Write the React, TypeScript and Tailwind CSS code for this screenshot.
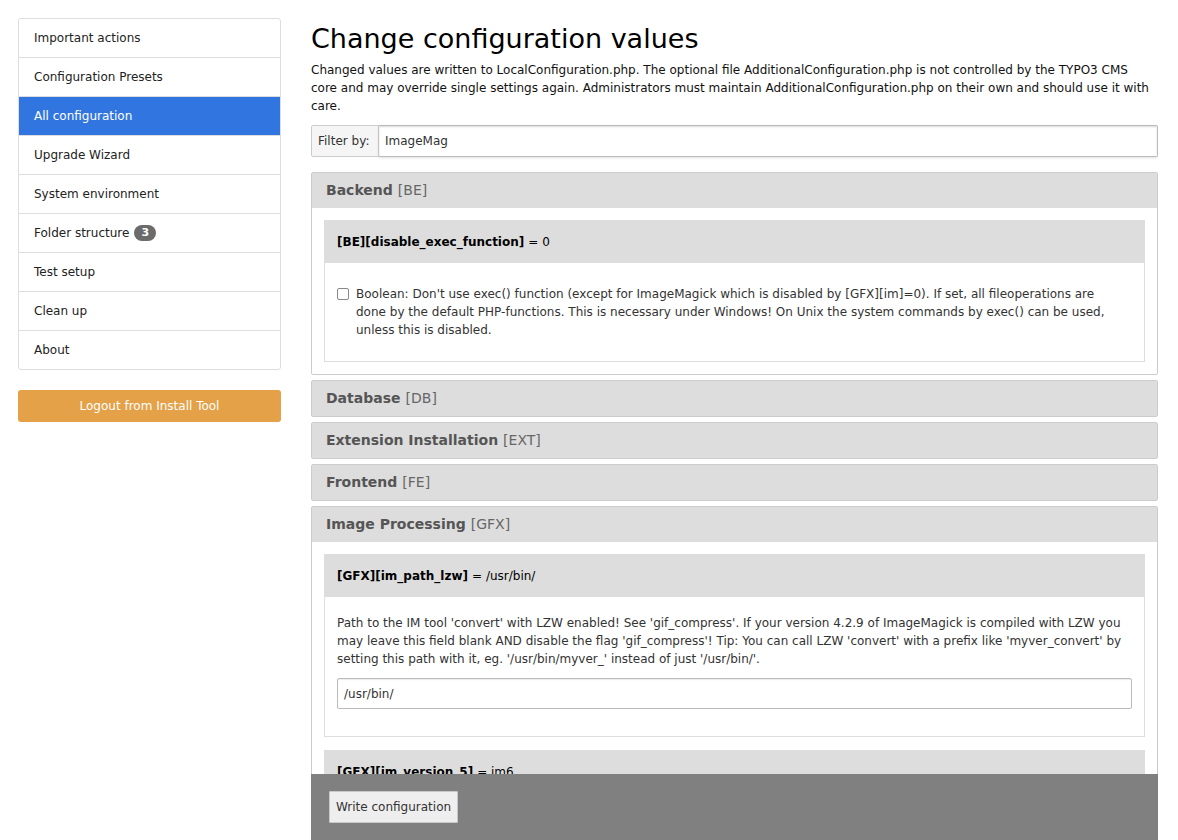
import React from "react";

const navItems = [
  { label: "Important actions" },
  { label: "Configuration Presets" },
  { label: "All configuration", active: true },
  { label: "Upgrade Wizard" },
  { label: "System environment" },
  { label: "Folder structure", badge: "3" },
  { label: "Test setup" },
  { label: "Clean up" },
  { label: "About" },
];

const collapsedSections = [
  { title: "Database", key: "DB" },
  { title: "Extension Installation", key: "EXT" },
  { title: "Frontend", key: "FE" },
];

const PanelHeader: React.FC<{ title: string; code: string }> = ({ title, code }) => (
  <div className="h-[35px] flex items-center pl-[14px] bg-[#dddddd] text-[14px] text-[#555]">
    <span className="font-bold">{title}</span>
    <span className="ml-[5px] text-[#666]">[{code}]</span>
  </div>
);

const ItemHeader: React.FC<{ name: string; value: string }> = ({ name, value }) => (
  <div className="h-[42px] flex items-center pl-[12px] bg-[#dddddd] text-black">
    <span className="font-bold">{name}</span>
    <span className="ml-[4px]">= {value}</span>
  </div>
);

export default function App() {
  return (
    <div className="flex gap-[30px] pl-[18px] pr-[20px] h-screen overflow-hidden bg-white text-[12px] text-[#333] font-['DejaVu_Sans',Verdana,sans-serif]">
      {/* Sidebar */}
      <aside className="w-[263px] shrink-0 pt-[18px]">
        <nav className="border border-[#dddddd] rounded-[3px] overflow-hidden">
          {navItems.map((item, i) => (
            <div
              key={item.label}
              className={`flex items-center pl-[15px] ${
                i < navItems.length - 1 ? "h-[39px] border-b border-[#dddddd]" : "h-[38px]"
              } ${item.active ? "bg-[#3176e0] text-white border-[#3176e0]" : "text-[#222]"}`}
            >
              {item.label}
              {item.badge && (
                <span className="ml-[5px] inline-flex items-center justify-center h-[16px] min-w-[22px] px-[6px] rounded-full bg-[#6b6b6b] text-white text-[11px] font-bold">
                  {item.badge}
                </span>
              )}
            </div>
          ))}
        </nav>
        <button
          type="button"
          className="mt-[20px] w-full h-[32px] rounded-[3px] bg-[#e4a147] text-white text-[12px]"
        >
          Logout from Install Tool
        </button>
      </aside>

      {/* Main */}
      <main className="flex-1 min-w-0 flex flex-col">
        <div className="flex-1 min-h-0 overflow-hidden pt-[22px]">
          <h1 className="text-[27px] leading-[34px] text-black">Change configuration values</h1>
          <p className="mt-[5px] pr-[8px] leading-[18px] text-[#111]">
            Changed values are written to LocalConfiguration.php. The optional file
            AdditionalConfiguration.php is not controlled by the TYPO3 CMS core and may override
            single settings again. Administrators must maintain AdditionalConfiguration.php on
            their own and should use it with care.
          </p>

          {/* Filter */}
          <div className="mt-[10px] flex h-[32px]">
            <div className="w-[68px] flex items-center pl-[6px] bg-[#f5f5f5] border border-[#cccccc] rounded-l-[2px] text-[#333]">
              Filter by:
            </div>
            <div className="flex-1 flex items-center pl-[6px] border border-l-0 border-[#bbbbbb] rounded-r-[2px] shadow-[inset_0_1px_2px_rgba(0,0,0,0.15),0_1px_3px_rgba(0,0,0,0.12)] text-[#333]">
              ImageMag
            </div>
          </div>

          {/* Backend */}
          <section className="mt-[15px] border border-[#cccccc] rounded-[2px]">
            <PanelHeader title="Backend" code="BE" />
            <div className="p-[12px]">
              <div className="border border-[#dddddd]">
                <ItemHeader name="[BE][disable_exec_function]" value="0" />
                <div className="pt-[22px] pb-[22px] pl-[12px] pr-[20px] flex items-start gap-[7px] leading-[18px]">
                  <span className="mt-[3px] shrink-0 w-[12px] h-[12px] border border-[#888] rounded-[2px] bg-white" />
                  <span>
                    Boolean: Don't use exec() function (except for ImageMagick which is disabled by
                    [GFX][im]=0). If set, all fileoperations are done by the default PHP-functions.
                    This is necessary under Windows! On Unix the system commands by exec() can be
                    used, unless this is disabled.
                  </span>
                </div>
              </div>
            </div>
          </section>

          {collapsedSections.map((s) => (
            <section key={s.key} className="mt-[5px] border border-[#cccccc] rounded-[2px]">
              <PanelHeader title={s.title} code={s.key} />
            </section>
          ))}

          {/* Image Processing */}
          <section className="mt-[5px] border border-[#cccccc] rounded-[2px]">
            <PanelHeader title="Image Processing" code="GFX" />
            <div className="p-[12px] flex flex-col gap-[13px]">
              <div className="border border-[#dddddd]">
                <ItemHeader name="[GFX][im_path_lzw]" value="/usr/bin/" />
                <div className="pt-[17px] pb-[27px] px-[12px] leading-[18px]">
                  <p>
                    Path to the IM tool 'convert' with LZW enabled! See 'gif_compress'. If your
                    version 4.2.9 of ImageMagick is compiled with LZW you may leave this field blank
                    AND disable the flag 'gif_compress'! Tip: You can call LZW 'convert' with a
                    prefix like 'myver_convert' by setting this path with it, eg. '/usr/bin/myver_'
                    instead of just '/usr/bin/'.
                  </p>
                  <div className="mt-[10px] h-[31px] flex items-center pl-[6px] border border-[#bbbbbb] rounded-[2px] shadow-[inset_0_1px_1px_rgba(0,0,0,0.08)] text-[#333]">
                    /usr/bin/
                  </div>
                </div>
              </div>
              <div className="border border-[#dddddd]">
                <ItemHeader name="[GFX][im_version_5]" value="im6" />
                <div className="h-[120px]" />
              </div>
            </div>
          </section>
        </div>

        {/* Sticky footer */}
        <div className="h-[66px] shrink-0 bg-[#808080] flex items-center pl-[18px]">
          <button
            type="button"
            className="h-[32px] px-[6px] bg-[#eeeeee] border border-[#c8c8c8] rounded-[1px] text-[#333] text-[12px]"
          >
            Write configuration
          </button>
        </div>
      </main>
    </div>
  );
}
